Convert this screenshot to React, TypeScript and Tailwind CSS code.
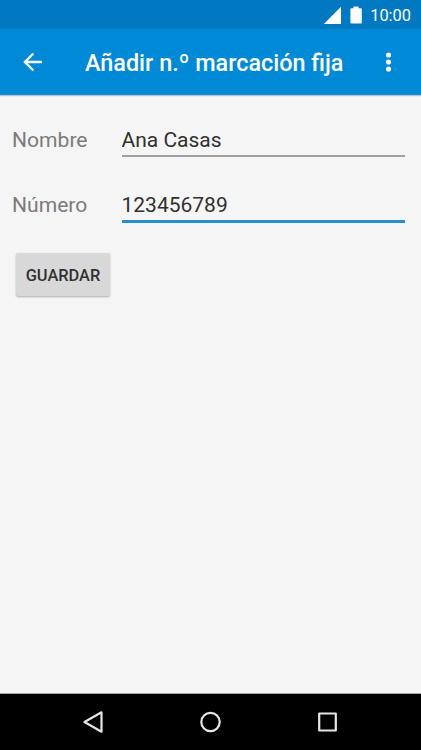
import { useState } from 'react';

interface FieldRowProps {
  id: string;
  label: string;
  value: string;
  active?: boolean;
  onChange: (value: string) => void;
}

function StatusBar() {
  return (
    <div className="flex h-[29px] shrink-0 items-center justify-end bg-[#0078c2] pr-[10px] text-white">
      <svg className="mr-[9px] h-[18px] w-[18px]" viewBox="0 0 18 18" fill="currentColor">
        <path d="M18 0.8V18.3H0.5z" />
      </svg>
      <svg className="mr-2 h-[18px] w-3" viewBox="0 0 12 18" fill="currentColor">
        <path d="M3.5 0.5h5v1.7h2.3q1 0 1 1v13.3q0 1-1 1H1.4q-1 0-1-1V3.2q0-1 1-1h2.1z" />
      </svg>
      <span className="pt-[3px] text-[16.4px] leading-none">10:00</span>
    </div>
  );
}

function AppBar({ title }: { title: string }) {
  return (
    <header className="flex h-[66px] shrink-0 items-center border-b border-[#2a86bb] bg-[#0089d6] pr-[18.5px] pl-[18.5px] text-white shadow-[0_1px_1px_#9fcbe4]">
      <button type="button" aria-label="Atrás">
        <svg className="h-7 w-7" viewBox="0.4 0 24 24" fill="currentColor">
          <path d="M20 11H7.83l5.59-5.59L12 4l-8 8 8 8 1.41-1.41L7.83 13H20v-2z" />
        </svg>
      </button>
      <h1 className="ml-[38.5px] flex-1 pt-[3px] text-[23.4px] leading-7 font-medium whitespace-nowrap">{title}</h1>
      <button type="button" aria-label="Más opciones">
        <svg className="h-7 w-7" viewBox="0.4 0 24 24" fill="currentColor">
          <circle cx="12" cy="6" r="2.2" />
          <circle cx="12" cy="12" r="2.2" />
          <circle cx="12" cy="18" r="2.2" />
        </svg>
      </button>
    </header>
  );
}

function FieldRow({ id, label, value, active = false, onChange }: FieldRowProps) {
  return (
    <div className="flex h-[65px] items-start pr-4 pl-3">
      <label htmlFor={id} className="w-[109.5px] shrink-0 text-[21.1px] leading-7 text-[#7b7b7b]">
        {label}
      </label>
      <input
        id={id}
        value={value}
        onChange={(e) => onChange(e.target.value)}
        className={`min-w-0 flex-1 bg-transparent text-[21px] leading-7 text-[#303030] outline-none ${
          active ? 'h-8 border-b-[3px] border-[#2590d0] pb-px' : 'h-[31px] border-b-2 border-[#a0a0a0] pb-px'
        }`}
      />
    </div>
  );
}

function NavigationBar() {
  return (
    <nav className="flex h-[57px] shrink-0 items-center justify-center gap-[89px] border-t border-[#a5a5a5] bg-black text-[#e6e6e6]">
      <button type="button" aria-label="Atrás">
        <svg className="h-7 w-7" viewBox="0.5 0 28 28" fill="none" stroke="currentColor" strokeWidth="2.2" strokeLinejoin="round">
          <path d="M22 4.3v19.4L5 14z" />
        </svg>
      </button>
      <button type="button" aria-label="Inicio">
        <svg className="h-7 w-7" viewBox="0.5 0 28 28" fill="none" stroke="currentColor" strokeWidth="2.2">
          <circle cx="14" cy="14" r="9.2" />
        </svg>
      </button>
      <button type="button" aria-label="Recientes">
        <svg className="h-7 w-7" viewBox="0.5 0 28 28" fill="none" stroke="currentColor" strokeWidth="2.2" strokeLinejoin="round">
          <rect x="5.7" y="5.5" width="16.6" height="17" />
        </svg>
      </button>
    </nav>
  );
}

export default function App() {
  const [name, setName] = useState('Ana Casas');
  const [number, setNumber] = useState('123456789');

  return (
    <div className="flex h-screen w-full flex-col overflow-hidden bg-[#f5f5f5] font-['Roboto',sans-serif]">
      <StatusBar />
      <AppBar title="Añadir n.º marcación fija" />
      <main className="flex-1 pt-[31px]">
        <FieldRow id="name" label="Nombre" value={name} onChange={setName} />
        <FieldRow id="number" label="Número" value={number} active onChange={setNumber} />
        <button
          type="button"
          className="mt-[-3px] ml-4 flex h-[43px] w-[94px] items-center justify-center rounded-[2px] bg-[#d8d8d8] pt-[3px] text-[16.4px] font-medium text-[#303030] shadow-[0_1px_2px_rgba(0,0,0,0.3)]"
        >
          GUARDAR
        </button>
      </main>
      <NavigationBar />
    </div>
  );
}
